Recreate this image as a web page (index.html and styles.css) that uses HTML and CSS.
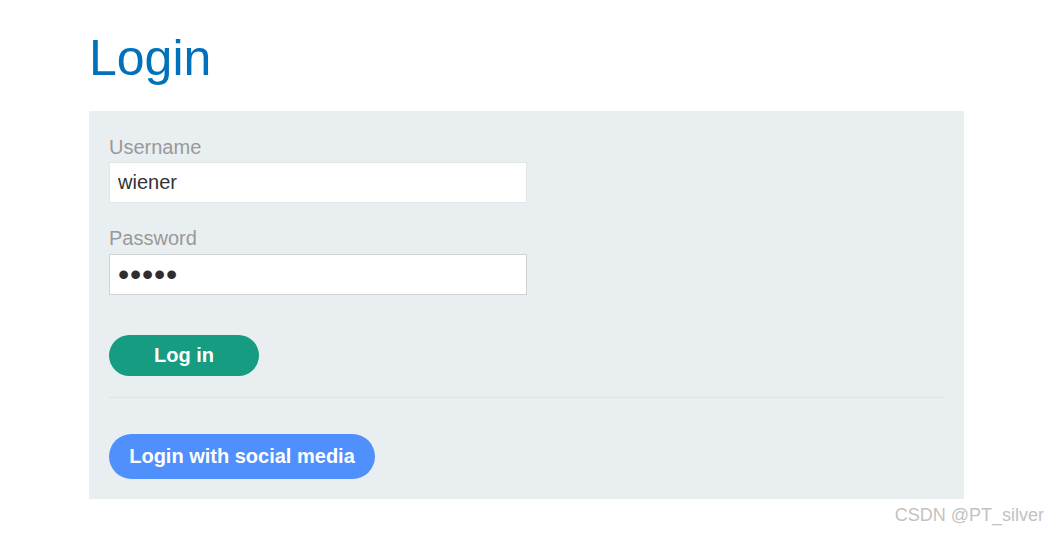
FILE: index.html
```html
<!DOCTYPE html>
<html>
<head>
<meta charset="utf-8">
<link rel="stylesheet" href="styles.css">
</head>
<body>
<main class="page">
  <h1 class="title">Login</h1>
  <section class="panel">
    <form class="login-form">
      <label class="field-label" for="username">Username</label>
      <input class="field-input field-input--light" id="username" type="text" value="wiener">
      <label class="field-label field-label--second" for="password">Password</label>
      <input class="field-input field-input--password" id="password" type="password" value="peter">
      <button class="btn btn-login" type="button">Log in</button>
    </form>
    <hr class="divider">
    <button class="btn btn-social" type="button">Login with social media</button>
  </section>
</main>
<div class="watermark">CSDN @PT_silver</div>
</body>
</html>
```

FILE: styles.css
```css
* { box-sizing: border-box; }
html, body {
  margin: 0;
  padding: 0;
  background: #ffffff;
  font-family: "Liberation Sans", Arial, sans-serif;
}
body {
  width: 1048px;
  height: 533px;
  position: relative;
  overflow: hidden;
}
.page {
  padding-left: 89px;
  padding-top: 28px;
  width: 964px;
}
.title {
  margin: 0 0 23px 0;
  font-size: 50px;
  line-height: 60px;
  font-weight: 400;
  color: #0071bc;
}
.panel {
  background: #e9eef1;
  padding: 24px 20px 20px 20px;
  width: 875px;
}
.login-form {
  display: flex;
  flex-direction: column;
  align-items: flex-start;
}
.field-label {
  display: block;
  font-size: 20px;
  line-height: 24px;
  color: #999999;
  margin-bottom: 3px;
}
.field-label--second {
  margin-bottom: 4px;
}
.field-input {
  width: 418px;
  height: 41px;
  margin: 0 0 23px 0;
  padding: 0 8px;
  border: 1px solid #cfd3d4;
  background: #ffffff;
  font-family: "Liberation Sans", Arial, sans-serif;
  font-size: 20px;
  color: #333333;
  outline: none;
}
.field-input--light {
  border-color: #e3e6e7;
}
.field-input--password {
  margin-bottom: 40px;
  padding: 0 8px;
  font-size: 32px;
  letter-spacing: 0.8px;
  color: #2e2e2e;
}
.btn {
  border: none;
  border-radius: 30px;
  color: #ffffff;
  font-family: "Liberation Sans", Arial, sans-serif;
  font-weight: 700;
  font-size: 20px;
  padding: 0;
  cursor: pointer;
}
.btn-login {
  width: 150px;
  height: 41px;
  background: #169c80;
}
.divider {
  margin: 21px 0 36px 0;
  border: none;
  border-top: 1px solid #dfe3e3;
  height: 0;
}
.btn-social {
  height: 45px;
  width: 266px;
  padding: 0;
  background: #4f90fc;
}
.watermark {
  position: absolute;
  right: 4px;
  top: 503px;
  font-size: 18px;
  line-height: 24px;
  color: #c2c2c2;
}
```
